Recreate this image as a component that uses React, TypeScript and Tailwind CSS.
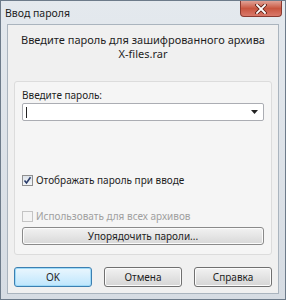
import React from "react";

const font = { fontFamily: '"Noto Sans", "Open Sans", sans-serif' };

const Button = ({ label, primary }: { label: string; primary?: boolean }) => (
	<button
		className={
			"h-[20px] w-[78px] rounded-[3px] border text-[10px] text-[#1e1e1e] " +
			(primary
				? "border-[#3c7fb1] bg-gradient-to-b from-[#eaf6fd] to-[#bee6fd] shadow-[inset_0_0_0_1px_#9edaf8]"
				: "border-[#707070] bg-gradient-to-b from-[#f2f2f2] to-[#d5d5d5] shadow-[inset_0_0_0_1px_#fcfcfc]")
		}
	>
		{label}
	</button>
);

const App = () => {
	return (
		<div
			className="flex h-[300px] w-[286px] flex-col border border-[#6d7b8a] bg-gradient-to-b from-[#e4e9ee] to-[#d6dce3]"
			style={font}
		>
			{/* title bar */}
			<div className="flex h-[23px] items-start justify-between">
				<span className="pl-[4px] pt-[5px] text-[10.5px] leading-[14px] text-[#1c1c1c]">Ввод пароля</span>
				<div className="mr-[3px] flex h-[16px] w-[42px] items-center justify-center rounded-b-[4px] border border-t-0 border-[#8a3a30] bg-gradient-to-b from-[#e0a196] via-[#c8553f] to-[#d9786a]">
					<svg width="12" height="10" viewBox="0 0 12 10">
						<path d="M2 1 L10 9 M10 1 L2 9" stroke="#5a1d14" strokeWidth="3.4" strokeLinecap="square" />
						<path d="M2 1 L10 9 M10 1 L2 9" stroke="#ffffff" strokeWidth="1.8" strokeLinecap="square" />
					</svg>
				</div>
			</div>

			{/* client area */}
			<div className="mx-[6px] mb-[5px] flex flex-1 flex-col border border-[#aab4be] bg-[#f0f0f0] text-[10px] text-[#1e1e1e]">
				<div className="flex flex-col items-center pt-[8px] text-[11px] leading-[14px]">
					<span>Введите пароль для зашифрованного архива</span>
					<span>X-files.rar</span>
				</div>

				<div className="mx-[6px] mt-[20px] flex flex-col rounded-[3px] border border-[#dcdcdc] bg-[#f5f5f5] px-[7px] pb-[9px]">
					<span className="mt-[7px] leading-[13px]">Введите пароль:</span>
					<div className="mt-[1px] flex h-[18px] items-center justify-between rounded-[2px] border border-[#abadb3] bg-white pl-[3px] pr-[5px]">
						<span className="h-[11px] w-px bg-[#222]" />
						<svg width="7" height="4" viewBox="0 0 7 4">
							<path d="M0 0 H7 L3.5 4 Z" fill="#222" />
						</svg>
					</div>

					<label className="mt-[53px] flex items-center gap-[3px] leading-[13px]">
						<span className="flex h-[11px] w-[11px] items-center justify-center border border-[#8f8f8f] bg-gradient-to-b from-[#dde3ea] to-[#f4f6f8]">
							<svg width="9" height="9" viewBox="0 0 9 9">
								<path d="M1.5 4.5 L3.5 7 L7.5 1.2" stroke="#2b3d6b" strokeWidth="1.6" fill="none" />
							</svg>
						</span>
						Отображать пароль при вводе
					</label>

					<label className="mt-[23px] flex items-center gap-[3px] leading-[13px] text-[#a0a0a0]">
						<span className="h-[11px] w-[11px] border border-[#c4c4c4] bg-[#f4f4f4]" />
						Использовать для всех архивов
					</label>

					<button className="mt-[4px] h-[18px] w-full rounded-[3px] border border-[#8a8a8a] bg-gradient-to-b from-[#f2f2f2] to-[#d8d8d8] text-[10px] shadow-[inset_0_0_0_1px_#fbfbfb]">
						Упорядочить пароли...
					</button>
				</div>

				<div className="mt-[12px] flex justify-between px-[6px]">
					<Button label="OK" primary />
					<Button label="Отмена" />
					<Button label="Справка" />
				</div>
			</div>
		</div>
	);
};

export default App;
